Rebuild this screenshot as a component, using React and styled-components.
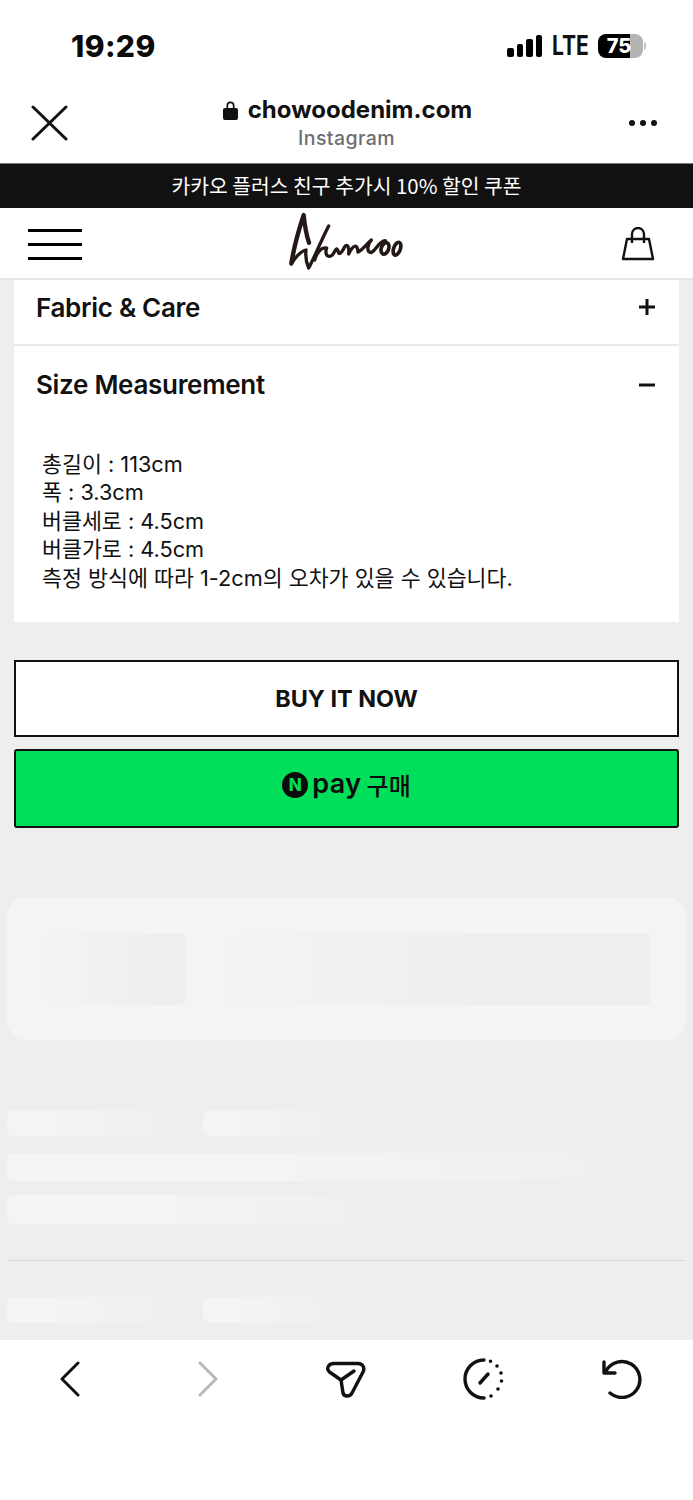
import React from "react";
import styled, { createGlobalStyle } from "styled-components";

const Global = createGlobalStyle`
html, body {
  margin: 0;
  padding: 0;
  background: #eeeeee;
}
* { box-sizing: border-box; }
body {
  font-family: Inter, "Noto Sans CJK KR", sans-serif;
  color: #111;
}
`;

const Page = styled.div`
width: 693px;
height: 1500px;
overflow: hidden;
display: flex;
flex-direction: column;
`;

const StatusBar = styled.div`
height: 84px;
background: #fff;
display: flex;
align-items: center;
justify-content: space-between;
padding: 8px 47px 0 71px;
`;

const Time = styled.div`
font-size: 30px;
font-weight: 800;
letter-spacing: 0.4px;
color: #0b0b0b;
`;

const StatusRight = styled.div`
display: flex;
align-items: center;
`;

const Signal = styled.div`
display: flex;
align-items: flex-end;
gap: 3px;
height: 22px;
margin-right: 10px;
`;

const SignalBar = styled.span`
width: 6.5px;
height: ${props => props.h}px;
background: #000;
border-radius: 2px;
`;

const Lte = styled.div`
font-size: 27px;
font-weight: 700;
line-height: 22px;
width: 46px;
transform: scaleX(0.78);
transform-origin: left center;
`;

const Battery = styled.div`
width: 45px;
height: 24px;
border-radius: 8px;
background: linear-gradient(90deg, #000 0 32px, #b4b4b4 32px);
color: #fff;
font-size: 20px;
font-weight: 800;
line-height: 24px;
text-align: center;
padding-right: 3px;
`;

const BatteryCap = styled.span`
width: 2px;
height: 8px;
margin-left: 1px;
border-radius: 0 2px 2px 0;
background: #c4c4c4;
`;

const BrowserBar = styled.div`
height: 79px;
background: #fff;
display: grid;
grid-template-columns: 100px 1fr 100px;
align-items: center;
`;

const CloseCell = styled.div`
padding-left: 31px;
display: flex;
`;

const MoreCell = styled.div`
padding-right: 36px;
display: flex;
justify-content: flex-end;
gap: 5px;
`;

const Dot = styled.span`
width: 6px;
height: 6px;
border-radius: 50%;
background: #111;
`;

const Address = styled.div`
display: flex;
flex-direction: column;
align-items: center;
padding: 2px 0 0 2px;
`;

const Domain = styled.div`
display: flex;
align-items: center;
gap: 10px;
font-size: 24px;
font-weight: 700;
line-height: 28px;
`;

const Referrer = styled.div`
font-size: 19.5px;
font-weight: 500;
line-height: 28px;
margin: 0 2px 0 0;
color: #6d6e73;
letter-spacing: 0.4px;
`;

const Banner = styled.div`
height: 45px;
background: #111;
border-top: 1px solid #777;
color: #fff;
font-size: 20.4px;
line-height: 43px;
text-align: center;
font-family: "Noto Sans CJK KR", sans-serif;
`;

const Nav = styled.div`
height: 72px;
background: #fff;
border-bottom: 2px solid #e6e6e6;
display: flex;
align-items: center;
justify-content: space-between;
padding: 2px 38px 0 28px;
`;

const Burger = styled.div`
width: 54px;
margin-top: 2px;
display: flex;
flex-direction: column;
gap: 11px;
`;

const BurgerLine = styled.span`
height: 3px;
background: #000;
`;

const LogoMark = styled.svg`
margin: -4px 13px 0 0;
`;

const Card = styled.div`
margin: 0 14px;
height: 342px;
background: #fff;
`;

const AccordionRow = styled.div`
height: ${props => props.h}px;
display: flex;
align-items: center;
justify-content: space-between;
padding: 0 24px ${props => props.under || 0}px 22px;
border-bottom: ${props => props.line ? "2px solid #e9e9e9" : "none"};
`;

const AccordionTitle = styled.div`
font-size: 26px;
font-weight: 600;
letter-spacing: -0.3px;
`;

const Details = styled.div`
padding: 26px 0 0 28px;
font-size: 21.7px;
line-height: 28.5px;
color: #111;
`;

const Actions = styled.div`
margin: 38px 14px 0;
display: flex;
flex-direction: column;
gap: 12px;
`;

const BuyButton = styled.div`
height: 77px;
background: #fff;
border: 2px solid #111;
display: flex;
align-items: center;
justify-content: center;
font-size: 23.4px;
font-weight: 700;
`;

const PayButton = styled.div`
height: 79px;
background: #01de5a;
border: 2px solid #111;
border-radius: 3px;
padding-bottom: 6px;
display: flex;
align-items: center;
justify-content: center;
`;

const NaverMark = styled.span`
width: 26px;
height: 26px;
border-radius: 50%;
background: #0b0b0b;
color: #01de5a;
font-size: 17px;
font-weight: 800;
line-height: 26px;
text-align: center;
margin-right: 4px;
`;

const PayWord = styled.span`
font-size: 27px;
font-weight: 600;
letter-spacing: 0.4px;
line-height: 26px;
margin: -3px 5px 0 0;
color: #0b0b0b;
`;

const PayKo = styled.span`
font-family: "Noto Sans CJK KR", sans-serif;
font-size: 24px;
font-weight: 500;
line-height: 26px;
color: #0b0b0b;
`;

const Skeleton = styled.div`
height: 513px;
padding: 69px 7px 0;
display: flex;
flex-direction: column;
`;

const SkeletonCard = styled.div`
height: 143px;
background: #f4f4f6;
border-radius: 20px;
padding: 36px 36px 0 33px;
display: flex;
gap: 30px;
`;

const Block = styled.div`
height: 72px;
flex: ${props => props.grow ? 1 : "0 0 145px"};
border-radius: 4px;
background: linear-gradient(90deg, #f4f4f6, #eeeeee ${props => props.grow ? "60%" : "80%"});
`;

const BarRow = styled.div`
display: flex;
gap: 13px;
height: ${props => props.h}px;
margin-top: ${props => props.top}px;
`;

const Bar = styled.div`
width: ${props => props.w}px;
border-radius: 7px;
background: linear-gradient(90deg, #f4f4f6 ${props => props.solid || 25}%, #eeeeee);
`;

const Rule = styled.div`
height: 1px;
margin: 36px 0 0 1px;
background: #d8d8d8;
`;

const BottomBar = styled.div`
height: 160px;
background: #fff;
padding: 17px 49px 0 48px;
display: flex;
justify-content: space-between;
align-items: flex-start;
`;

const IconSlot = styled.div`
width: 44px;
height: 44px;
display: flex;
align-items: center;
justify-content: center;
`;

const Logo = () => (
  <LogoMark width="150" height="75" viewBox="0 0 450 225" fill="none" stroke="#231815" strokeLinecap="round" strokeLinejoin="round">
    <path d="M64 178C72 130 88 72 101 33C104 62 107 88 117 116" strokeWidth="13" />
    <path d="M64 180C78 156 94 142 108 138C106 155 110 178 116 192C130 168 152 112 176 66" strokeWidth="10" />
    <path d="M134 168C140 146 154 128 170 132C164 150 172 166 188 152C196 140 200 128 204 140C206 156 214 148 224 128C232 118 238 128 236 150C250 122 262 118 264 144C276 140 288 122 304 108C290 122 290 146 304 146C320 136 326 112 346 110" strokeWidth="10" />
    <ellipse cx="345" cy="133" rx="11" ry="18" transform="rotate(20 345 133)" strokeWidth="11" />
    <ellipse cx="381" cy="134" rx="10" ry="20" transform="rotate(20 381 134)" strokeWidth="11" />
  </LogoMark>
);

const App = () => {
  return (
    <Page>
      <Global />
      <StatusBar>
        <Time>19:29</Time>
        <StatusRight>
          <Signal>
            <SignalBar h={9} />
            <SignalBar h={13} />
            <SignalBar h={18} />
            <SignalBar h={22} />
          </Signal>
          <Lte>LTE</Lte>
          <Battery>75</Battery>
          <BatteryCap />
        </StatusRight>
      </StatusBar>

      <BrowserBar>
        <CloseCell>
          <svg width="37" height="36" viewBox="0 0 37 36" fill="none" stroke="#111" strokeWidth="3" strokeLinecap="round">
            <path d="M2 2L35 34M35 2L2 34" />
          </svg>
        </CloseCell>
        <Address>
          <Domain>
            <svg width="15" height="20" viewBox="0 0 15 20" fill="#111">
              <path d="M3.5 8V5.5a4 4 0 0 1 8 0V8H13a2 2 0 0 1 2 2v8a2 2 0 0 1-2 2H2a2 2 0 0 1-2-2v-8a2 2 0 0 1 2-2h1.5zM5.2 8h4.6V5.5a2.3 2.3 0 0 0-4.6 0V8z" />
            </svg>
            chowoodenim.com
          </Domain>
          <Referrer>Instagram</Referrer>
        </Address>
        <MoreCell>
          <Dot />
          <Dot />
          <Dot />
        </MoreCell>
      </BrowserBar>

      <Banner>카카오 플러스 친구 추가시 10% 할인 쿠폰</Banner>

      <Nav>
        <Burger>
          <BurgerLine />
          <BurgerLine />
          <BurgerLine />
        </Burger>
        <Logo />
        <svg width="34" height="34" viewBox="0 0 34 34" fill="none" stroke="#111" strokeWidth="2.4">
          <path d="M6 12H28L32 32H2L6 12Z" strokeLinejoin="round" />
          <path d="M11 16V7a6 6 0 0 1 12 0V16" />
        </svg>
      </Nav>

      <Card>
        <AccordionRow h={66} under={9} line>
          <AccordionTitle>Fabric &amp; Care</AccordionTitle>
          <svg width="16" height="16" viewBox="0 0 16 16" stroke="#111" strokeWidth="3">
            <path d="M0 8H16M8 0V16" />
          </svg>
        </AccordionRow>
        <AccordionRow h={78}>
          <AccordionTitle>Size Measurement</AccordionTitle>
          <svg width="16" height="16" viewBox="0 0 16 16" stroke="#111" strokeWidth="3">
            <path d="M0 8H16" />
          </svg>
        </AccordionRow>
        <Details>
          총길이 : 113cm<br />
          폭 : 3.3cm<br />
          버클세로 : 4.5cm<br />
          버클가로 : 4.5cm<br />
          측정 방식에 따라 1-2cm의 오차가 있을 수 있습니다.
        </Details>
      </Card>

      <Actions>
        <BuyButton>BUY IT NOW</BuyButton>
        <PayButton>
          <NaverMark>N</NaverMark>
          <PayWord>pay</PayWord>
          <PayKo>구매</PayKo>
        </PayButton>
      </Actions>

      <Skeleton>
        <SkeletonCard>
          <Block />
          <Block grow />
        </SkeletonCard>
        <BarRow h={26} top={70}>
          <Bar w={183} />
          <Bar w={140} />
        </BarRow>
        <BarRow h={28} top={17}>
          <Bar w={679} solid={40} />
        </BarRow>
        <BarRow h={29} top={14}>
          <Bar w={400} solid={40} />
        </BarRow>
        <Rule />
        <BarRow h={26} top={36}>
          <Bar w={183} />
          <Bar w={140} />
        </BarRow>
      </Skeleton>

      <BottomBar>
        <IconSlot>
          <svg width="20" height="36" viewBox="0 0 20 36" fill="none" stroke="#111" strokeWidth="3" strokeLinecap="round" strokeLinejoin="round">
            <path d="M18 2L2 18L18 34" />
          </svg>
        </IconSlot>
        <IconSlot>
          <svg width="20" height="36" viewBox="0 0 20 36" fill="none" stroke="#b9b9b9" strokeWidth="3" strokeLinecap="round" strokeLinejoin="round">
            <path d="M2 2L18 18L2 34" />
          </svg>
        </IconSlot>
        <IconSlot>
          <svg width="40" height="37" viewBox="0 0 40 37" fill="none" stroke="#111" strokeWidth="3.4" strokeLinecap="round" strokeLinejoin="round">
            <path d="M8 2.5H32C37 2.5 39 7 37 11L26 32C24 36 18 36 17 32L15 19L3.5 11C0 8 2 2.5 8 2.5Z" />
            <path d="M15 19L28 10" />
          </svg>
        </IconSlot>
        <IconSlot>
          <svg width="42" height="42" viewBox="0 0 42 42" fill="none" stroke="#111" strokeWidth="3.4" strokeLinecap="round">
            <path d="M21 2A19 19 0 0 0 21 40" />
            <path d="M17 25L25 16" />
            <path d="M27.5 3.2h.01M34 8h.01M38 15h.01M38.5 23h.01M35 31h.01M28 38h.01" strokeWidth="3.6" />
          </svg>
        </IconSlot>
        <IconSlot>
          <svg width="42" height="40" viewBox="0 0 42 40" fill="none" stroke="#111" strokeWidth="3.4" strokeLinecap="round" strokeLinejoin="round">
            <path d="M5 12A18 18 0 1 1 9 34" />
            <path d="M3 3V14H14" />
          </svg>
        </IconSlot>
      </BottomBar>
    </Page>
  );
};

export default App;
